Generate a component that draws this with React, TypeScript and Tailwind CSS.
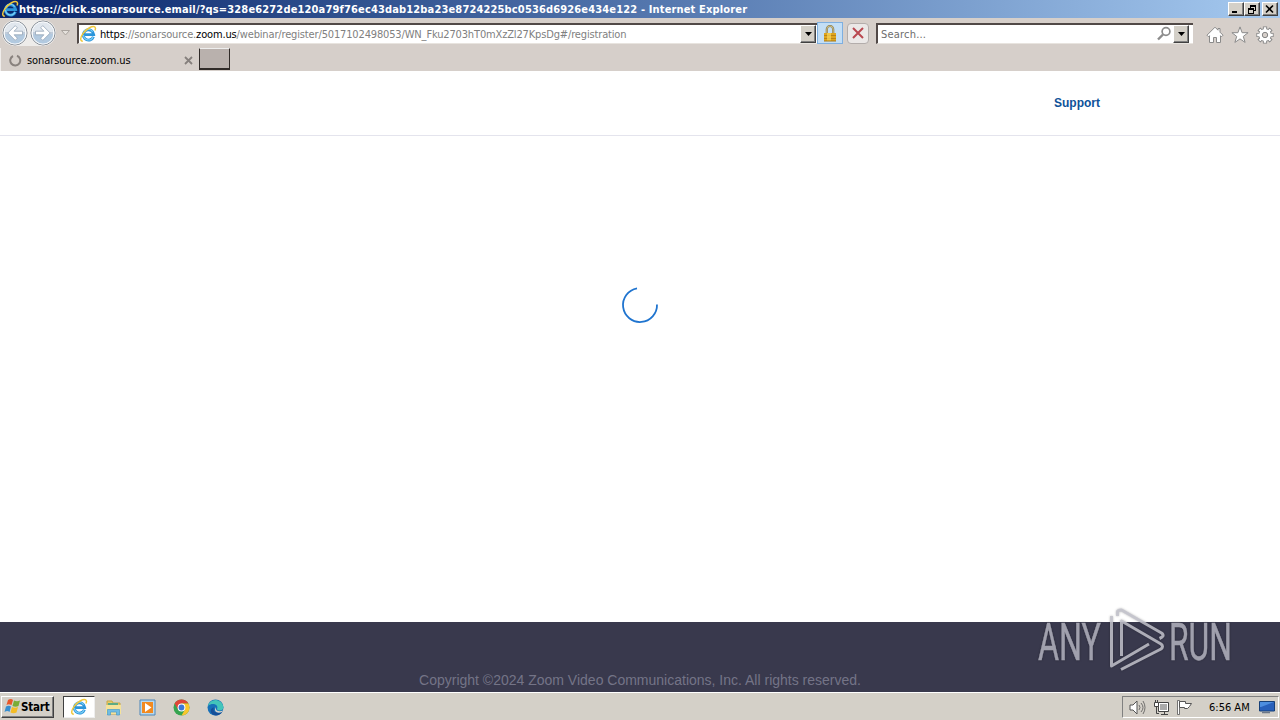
import type { ReactNode } from 'react';

const ui = "font-['DejaVu_Sans_Condensed','DejaVu_Sans',sans-serif]";
const raised = 'border border-t-white border-l-white border-r-[#404040] border-b-[#404040] bg-[#d4d0c8] shadow-[inset_-1px_-1px_0_#808080]';

function IeLogo({ size }: { size: number }) {
  return (
    <svg width={size} height={size} viewBox="0 0 16 16" fill="none" className="shrink-0 overflow-visible">
      <path d="M13.4 10.7A5.2 5.2 0 1 1 13.7 8.6H4.5" stroke="#2b95da" strokeWidth="2.9" />
      <path d="M13 11A4.9 4.9 0 0 1 3.6 9M3.7 6.6A5 5 0 0 1 12.6 5.6" stroke="#7fd0f7" strokeWidth="1.1" />
      <path d="M2.8 15.2C-.2 15.2.2 11.5 3 7.6 6.6 2.6 12.7-.8 14.9 1c.9.8.7 2.2.1 3.5" stroke="#f0c83c" strokeWidth="1.5" />
    </svg>
  );
}

function NavButton({ flip = false }: { flip?: boolean }) {
  return (
    <svg width="26" height="26" viewBox="0 0 26 26" fill="none" className={flip ? '-scale-x-100' : ''}>
      <circle cx="13" cy="13" r="12" fill="#d9e0e8" stroke="#848b94" />
      <circle cx="13" cy="13" r="10.8" fill="#c0ccda" stroke="#f8fafc" strokeWidth="1.2" />
      <path d="M3 14a10 9.5 0 0 0 20 0Z" fill="#b2c9df" />
      <path d="M3 12a10 9.5 0 0 1 20 0Z" fill="#e1e7ee" />
      <path d="m13.2 5.6-7.4 7.4 7.4 7.4 2.2-2.2-3.3-3.4h8.4v-3.6h-8.4l3.3-3.4Z" fill="#fff" stroke="#94a5b8" strokeWidth=".8" />
    </svg>
  );
}

function DropArrow() {
  return (
    <span className={`flex items-center justify-center w-4 h-[18px] shrink-0 ${raised}`}>
      <svg width="7" height="4" viewBox="0 0 7 4"><path d="M0 0h7L3.5 4Z" fill="#000" /></svg>
    </span>
  );
}

function WindowButton({ children }: { children: ReactNode }) {
  return (
    <span className={`flex items-center justify-center w-4 h-[14px] ${raised}`}>
      <svg width="12" height="11" viewBox="0 0 12 11" fill="none" stroke="#000" shapeRendering="crispEdges">{children}</svg>
    </span>
  );
}

function TitleBar() {
  return (
    <div className="flex items-center h-[18px] pl-0.5 pr-0.5 bg-linear-to-r from-[#0a246a] to-[#a6caf0]">
      <IeLogo size={16} />
      <span className="ml-px pt-0.5 flex-1 whitespace-nowrap text-white font-bold text-[11px] tracking-[0.15px]">
        https://click.sonarsource.email/?qs=328e6272de120a79f76ec43dab12ba23e8724225bc0536d6926e434e122 - Internet Explorer
      </span>
      <WindowButton><path d="M2 8h5" strokeWidth="2" /></WindowButton>
      <WindowButton>
        <path d="M4.5 4V1.5h5v5H8M4 2h6M2.5 4.5h5v5h-5ZM2 5h6" />
      </WindowButton>
      <span className="w-0.5" />
      <WindowButton><path d="m2 1.5 7 7m0-7-7 7" strokeWidth="1.6" shapeRendering="auto" /></WindowButton>
    </div>
  );
}

function AddressBar() {
  return (
    <div className="flex items-center h-[30px] pl-0.5">
      <div className="flex gap-0.5 rounded-full bg-[#eeecea]">
        <NavButton />
        <NavButton flip />
      </div>
      <svg width="9" height="6" viewBox="0 0 9 6" className="ml-[5px]"><path d="M.5.5h8l-4 4.5Z" fill="#e5e1dc" stroke="#aaa49f" /></svg>
      <div className="flex items-center ml-[7px] w-[740px] h-[21px] bg-white border-t-2 border-l-2 border-[#514947] border-b-[#e8e4df] border-b pl-px pr-px">
        <IeLogo size={16} />
        <span className="ml-1 pt-[3px] flex-1 whitespace-nowrap text-[11px] text-[#808080] tracking-[-0.15px]">
          <span className="text-black">https</span>://sonarsource.<span className="text-black">zoom.us</span>/webinar/register/5017102498053/WN_Fku2703hT0mXzZl27KpsDg#/registration
        </span>
        <DropArrow />
      </div>
      <span className="flex items-center justify-center w-[26px] h-[22px] bg-[#c3def5] border border-[#7eafe0]">
        <svg width="14" height="17" viewBox="0 0 14 17" fill="none">
          <path d="M3.8 8V4.2a3.2 3.2 0 0 1 6.4 0V8" stroke="#8b7d50" strokeWidth="2.2" />
          <path d="M3.8 8V4.2a3.2 3.2 0 0 1 6.4 0V8" stroke="#e4d59b" strokeWidth=".7" />
          <path d="M1 8h12v8H1Z" fill="#dfa51d" />
          <path d="M1 10.5h12m-12 3h12" stroke="#b88418" />
          <path d="M4 8h4v8H4Z" fill="#f8d75c" fillOpacity=".7" />
          <path d="M1 16h12" stroke="#a87713" />
        </svg>
      </span>
      <span className="flex items-center justify-center ml-1 w-[22px] h-[21px] rounded-sm bg-[#ebe8e7] border border-[#b3adab]">
        <svg width="12" height="12" viewBox="0 0 12 12"><path d="M1 1l10 10M11 1 1 11" stroke="#b94850" strokeWidth="2" /></svg>
      </span>
      <div className="flex items-center ml-[7px] w-[317px] h-[21px] bg-white border-t-2 border-l-2 border-[#514947] border-b-[#e8e4df] border-b pl-[3px] pr-1">
        <span className="flex-1 pt-[3px] text-[11px] text-[#6d6d6d] tracking-[0.2px]">Search...</span>
        <svg width="15" height="15" viewBox="0 0 15 15" fill="none" stroke="#8c8c8c" className="mr-px">
          <circle cx="9" cy="5.5" r="3.9" strokeWidth="1.7" />
          <path d="m6 8.5-5 5" strokeWidth="2.4" />
        </svg>
        <DropArrow />
      </div>
      <div className="flex items-center gap-[7px] ml-[13px] pt-[3px]">
        <svg width="18" height="18" viewBox="0 0 18 18" fill="#fff" stroke="#8a8a8a">
          <path d="M9 1.2 1 9.2 2.5 10.7 3.5 9.7v6.8h4v-5h3v5h4V9.7l1 1 1.5-1.5-3-3V2.5H12v1.7Z" />
        </svg>
        <svg width="18" height="18" viewBox="0 0 18 18" fill="#fff" stroke="#8a8a8a">
          <path d="m9 .9 2.1 5.8h6l-4.8 3.7 1.8 6L9 12.9l-5.1 3.5 1.8-6L.9 6.7h6Z" />
        </svg>
        <svg width="18" height="18" viewBox="0 0 18 18" fill="none">
          <g stroke="#858585" strokeWidth="4.2">
            <path d="M9 .4v17.2M.4 9h17.2M2.9 2.9l12.2 12.2m0-12.2L2.9 15.1" />
          </g>
          <circle cx="9" cy="9" r="6.7" fill="#858585" />
          <path d="M9 1.2v15.6M1.2 9h15.6M3.5 3.5l11 11m0-11-11 11" stroke="#fff" strokeWidth="2.4" />
          <circle cx="9" cy="9" r="5.9" fill="#fff" />
          <circle cx="9" cy="9" r="2.7" fill="#d6cfca" stroke="#858585" />
        </svg>
      </div>
    </div>
  );
}

function TabStrip() {
  return (
    <div className="flex h-[23px]">
      <div className="flex items-center w-[198px] pl-2 pr-[5px] border-l border-[#f1eeec]">
        <svg width="13" height="13" viewBox="0 0 13 13" fill="none" className="mt-px"><path d="M8 1.8A5 5 0 1 1 4 2" stroke="#89827e" strokeWidth="2" /></svg>
        <span className="ml-[5px] pt-[3px] flex-1 text-[11px] text-black tracking-[-0.08px]">sonarsource.zoom.us</span>
        <svg width="9" height="9" viewBox="0 0 9 9" className="mt-px"><path d="m1 1 7 7m0-7L1 8" stroke="#86807d" strokeWidth="1.8" /></svg>
      </div>
      <div className="ml-px w-[31px] h-[22px] bg-[#b9b1ad] border border-b-2 border-[#302b28] border-t-[#eee]" />
    </div>
  );
}

function Watermark() {
  return (
    <svg
      width="204"
      height="68"
      viewBox="0 0 204 68"
      fill="none"
      className="absolute right-[40px] -top-[15px] overflow-visible drop-shadow-[0_0_1px_rgba(0,0,0,0.3)]"
    >
      <g fill="#a0a0ad" stroke="#a0a0ad" strokeWidth=".5" fontFamily="Roboto, sans-serif" fontSize="51">
        <text x="2" y="53" textLength="63" lengthAdjust="spacingAndGlyphs">ANY</text>
        <text x="133" y="53" textLength="63" lengthAdjust="spacingAndGlyphs">RUN</text>
      </g>
      <g stroke="#c3c3cc" strokeOpacity=".85" strokeWidth="3" strokeLinejoin="round">
        <path d="M75.5 9v50L113 37" />
        <path d="M81.500 9V5q0-2 4-2l40 23q4 3-2 5.500" />
        <path d="M85.500 49V14l39.500 23q3 2.500 0 5L85 62.500" />
      </g>
    </svg>
  );
}

function Page() {
  return (
    <main className="flex flex-col h-[622px] flex-1 bg-white font-['Liberation_Sans',sans-serif]">
      <header className="flex justify-end items-center h-[65px] pr-[180px] border-b border-[#e4e4ed]">
        <a className="text-xs font-bold text-[#0e5299]">Support</a>
      </header>
      <div className="flex justify-center flex-1 pt-[150px]">
        <svg width="38" height="38" viewBox="0 0 38 38" fill="none">
          <path d="M36 18.500A17 17 0 1 1 16 2.300" stroke="#1f74cf" strokeWidth="1.8" />
        </svg>
      </div>
      <footer className="relative flex items-end justify-center h-[70px] bg-[#39394d] pb-0.5">
        <p className="text-sm text-[#747487]">Copyright ©2024 Zoom Video Communications, Inc. All rights reserved.</p>
        <Watermark />
      </footer>
    </main>
  );
}

function Taskbar() {
  return (
    <div className="flex items-center h-7 bg-[#d4d0c8] border-t border-white pl-px">
      <div className={`flex items-center w-[53px] h-[22px] pl-0.5 ${raised}`}>
        <svg width="17" height="17" viewBox="0 0 17 17">
          <path d="M4 2q3-2 5 0L7.500 7q-3-1.500-5 0Z" fill="#e95728" />
          <path d="M10 2.500q3 1.500 6 0L14.500 8q-3 1.500-6 0Z" fill="#79ac36" />
          <path d="M2 8.500q3-1.500 5 0L5.500 14q-2-2-5 0Z" fill="#368ed0" />
          <path d="M8 9q3 1.500 6 0l-1.500 5.500q-3 1.500-6 0Z" fill="#f4bc25" />
        </svg>
        <span className="pt-0.5 font-bold text-[11.5px] tracking-[-0.2px]">Start</span>
      </div>
      <div className="flex items-center justify-center ml-[9px] w-8 h-[22px] pt-px bg-white border border-t-[#404040] border-l-[#404040] border-[#eee]">
        <IeLogo size={16} />
      </div>
      <div className="flex items-center ml-2.5 mt-px gap-[17px]">
        <svg width="17" height="17" viewBox="0 0 17 17">
          <path d="M2 2h5l1 2h7v11H2Z" fill="#e9cb67" stroke="#c7a846" />
          <path d="M3 4h10v2H3Z" fill="#5dab84" />
          <path d="M1 6h15v9H1Z" fill="#f5e29a" />
          <path d="M2.500 16v-5.500h12V16h-3v-3h-6v3Z" fill="#70bce3" stroke="#4b9cc8" strokeWidth=".7" />
        </svg>
        <svg width="17" height="17" viewBox="0 0 17 17">
          <path d="M1 1h15v15H1Z" fill="#b9d9ed" stroke="#4c87bb" />
          <path d="M3 3h11v11H3Z" fill="#f28a20" />
          <path d="m6 4 6.500 4.500L6 13Z" fill="#fff" />
        </svg>
        <svg width="17" height="17" viewBox="0 0 17 17">
          <circle cx="8.5" cy="8.5" r="8" fill="#35a450" />
          <path d="M1.600 4.500a8 8 0 0 1 13.800 0H8.500L5 10.500Z" fill="#df4538" />
          <path d="M15.400 4.500A8 8 0 0 1 8.500 16.500l3.500-6-3.500-6Z" fill="#fac62b" />
          <circle cx="8.5" cy="8.5" r="3.9" fill="#fff" />
          <circle cx="8.5" cy="8.5" r="2.9" fill="#3c78d8" />
        </svg>
        <svg width="17" height="17" viewBox="0 0 17 17">
          <circle cx="8.5" cy="8.5" r="8" fill="#1770b8" />
          <path d="M.8 7A8 8 0 0 1 16.500 8c0 4-5.500 4.500-6.500 2 2-4-4-7-9.200-3Z" fill="#43c5ba" />
          <path d="M7 8.500c-2 4 2.500 7 8.500 4-3 5-9 5-11.500 1-1-3 1-5 3-5Z" fill="#154e98" />
          <path d="M9 8c-1 4 3 5 7 3.500l-1 1.500C10 15 6 12 9 8Z" fill="#d4d0c8" />
        </svg>
      </div>
      <div className="flex items-center ml-auto mr-px w-[157px] h-[22px] border border-t-[#808080] border-l-[#808080] border-white pl-1.5">
        <svg width="17" height="17" viewBox="0 0 17 17" fill="none" stroke="#555" className="mt-px">
          <path d="M1 6h3l4-4v13l-4-4H1Z" fill="#fff" />
          <path d="M10 6q2 2.500 0 5m2-7q4 4.500 0 9m2-11q4 6.500 0 13" strokeWidth=".8" />
        </svg>
        <svg width="17" height="17" viewBox="0 0 17 17" fill="none" stroke="#444" className="ml-[7px] mt-px">
          <path d="M5.500 3.500h10v9h-10Z" fill="#fff" />
          <path d="M7 5h7v6H7Z" fill="#aaa" stroke="none" />
          <path d="M2.500 1v2.500m2-2.500v2.500M3.500 7v7.500H6m2 1h7m-3.500-3v3" />
          <path d="M1.500 3.500h4v4h-4Z" fill="#fff" />
        </svg>
        <svg width="17" height="17" viewBox="0 0 17 17" fill="none" stroke="#555" className="ml-[6px] mt-px">
          <path d="M1.500 1.500h2v14h-2Z" fill="#fff" strokeWidth=".8" />
          <path d="M3.500 2.500h6v2h6l-2 3-2 2h-3v-1h-5Z" fill="#fff" />
        </svg>
        <span className="ml-4 pt-[3px] whitespace-nowrap text-[11px]">6:56 AM</span>
        <svg width="16" height="14" viewBox="0 0 16 14" className="ml-auto mr-[3px] mt-px">
          <path d="M.5 1.500h15v9.500H.5Z" fill="#2860bb" stroke="#174078" />
          <path d="M1 2h14L2 7H1Z" fill="#4d8ee0" />
          <path d="M3 12.500h8" stroke="#6d7888" strokeWidth="1.5" />
        </svg>
      </div>
    </div>
  );
}

export default function App() {
  return (
    <div className={`flex flex-col w-[1280px] h-[720px] overflow-hidden bg-[#d6cfca] text-black ${ui}`}>
      <TitleBar />
      <AddressBar />
      <TabStrip />
      <Page />
      <Taskbar />
    </div>
  );
}
